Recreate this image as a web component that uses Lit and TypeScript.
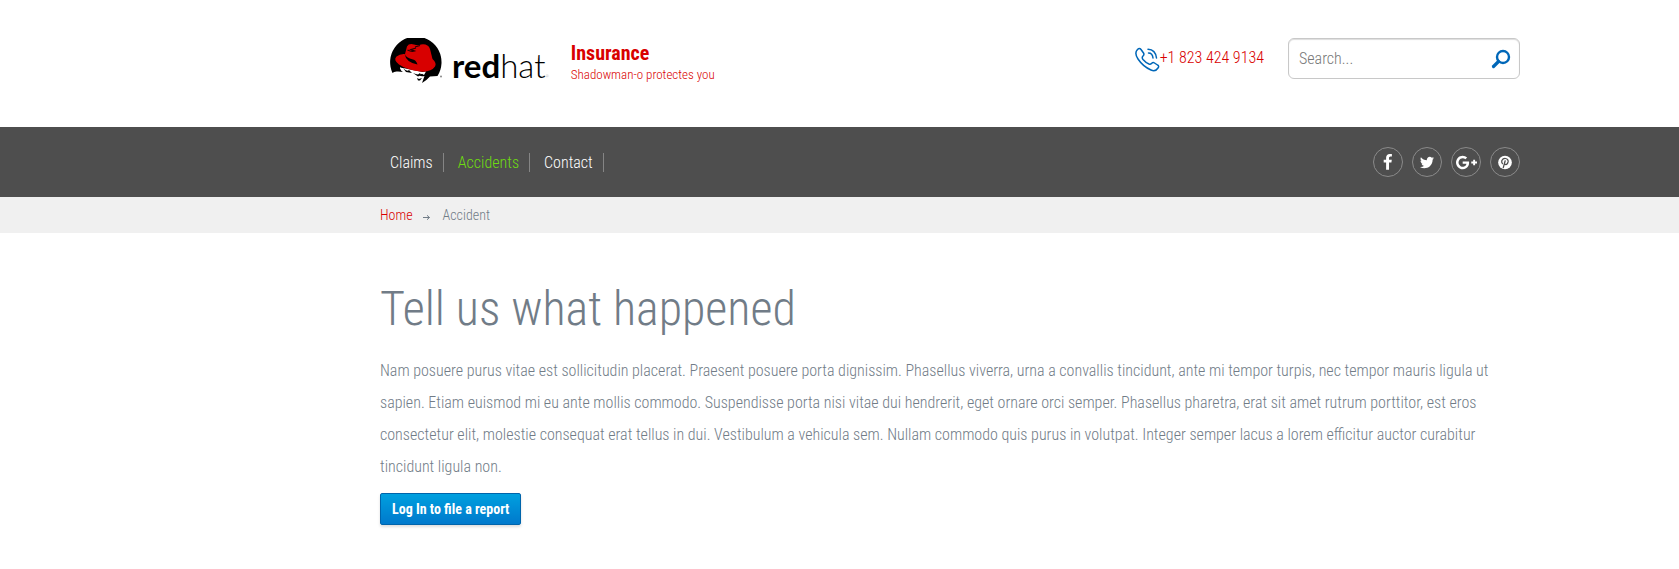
import { LitElement, html, css, svg } from "lit";
import { customElement } from "lit/decorators.js";

const facebook = svg`<path d="M1343 12v264h-157q-86 0-116 36t-30 108v189h293l-39 296h-254v759h-306v-759h-255v-296h255v-218q0-186 104-288.500t277-102.500q147 0 228 12z"/>`;
const twitter = svg`<path d="M1684 408q-67 98-162 167 1 14 1 42 0 130-38 259.500t-115.500 248.500-184.500 210.500-258 146-323 54.500q-271 0-496-145 35 4 78 4 225 0 401-138-105-2-188-64.500t-114-159.500q33 5 61 5 43 0 85-11-112-23-185.500-111.500t-73.500-205.500v-4q68 38 146 41-66-44-105-115t-39-154q0-88 44-163 121 149 294.500 238.500t371.500 99.500q-8-38-8-74 0-134 94.500-228.500t228.500-94.500q140 0 236 102 109-21 205-78-37 115-142 178 93-10 186-50z"/>`;
const google = svg`<path d="M1437 913q0 208-87 370.500t-248 254-369 91.500q-149 0-285-58t-234-156-156-234-58-285 58-285 156-234 234-156 285-58q286 0 491 192l-199 191q-117-113-292-113-123 0-227.500 62t-165.500 168.500-61 232.500 61 232.500 165.500 168.500 227.500 62q83 0 152.500-23t114.500-57.500 78.500-78.500 49-83 21.500-74h-416v-252h692q12 63 12 122zm867-122v210h-209v209h-210v-209h-209v-210h209v-209h210v209h209z"/>`;
const pinterest = svg`<g><circle cx="12" cy="12" r="12"/><path d="M7.500 14Q5.500 11.500 6.500 8.500Q8.500 4.500 13 5Q18 6 17.500 10.500Q16.500 15.500 13.500 15.700Q11.500 15.500 11 13.500M12.300 9L9 21" fill="none" stroke="#4e4e4e" stroke-width="2.200" stroke-linecap="round"/></g>`;

const networks = [
  { label: "Facebook", box: "90 0 1792 1792", width: 17, shape: facebook },
  { label: "Twitter", box: "0 0 1792 1792", width: 16, shape: twitter },
  { label: "Google Plus", box: "0 0 2304 1792", width: 21, shape: google },
  { label: "Pinterest", box: "-2 -2 28 28", width: 16, shape: pinterest },
];

const sections = [
  { label: "Claims", current: false },
  { label: "Accidents", current: true },
  { label: "Contact", current: false },
];

@customElement("app-root")
export class AppRoot extends LitElement {
  static styles = css`
    :host {
      display: block;
      background: #fff;
      color: #717c87;
      font: 300 16px/32px "Roboto Condensed", Roboto, sans-serif;
    }
    * { box-sizing: border-box; }
    a { color: #d90000; text-decoration: none; }
    svg { display: block; }
    .wrap { max-width: 1140px; margin: 0 24px 0 380px; }
    .top {
      display: flex;
      align-items: flex-start;
      padding: 38px 0 43px 9px;
    }
    .logo { display: flex; color: #000; }
    .mark { width: 54px; height: 46px; }
    .word {
      font: 300 33px/46px Lato, sans-serif;
      padding: 4px 0 0 9px;
      height: 46px;
    }
    .word b { font-weight: 700; }
    .reg { font-size: 4px; color: #777; }
    .brand { margin-left: 22px; color: #d90000; }
    .name { font-size: 20px; line-height: 30px; font-weight: 700; }
    .tag { font-size: 13px; line-height: 14px; }
    .contact { display: flex; align-items: flex-start; gap: 24px; margin-left: auto; }
    .phone { display: flex; align-items: center; line-height: 40px; }
    .phone-icon { margin-top: 4px; }
    .search { position: relative; width: 232px; }
    .field {
      display: block;
      width: 100%;
      height: 41px;
      padding: 0 48px 0 10px;
      border: 1px solid #c8c8c8;
      border-radius: 6px;
      box-shadow: inset 0 1px 1px #ddd;
      font: inherit;
      color: #555;
      background: #fff;
    }
    .field::placeholder { color: #777; opacity: 1; }
    .go {
      position: absolute;
      top: 11px;
      right: 9px;
      padding: 0;
      border: 0;
      background: none;
      cursor: pointer;
    }
    .bar { background: #4e4e4e; }
    .nav { display: flex; align-items: center; justify-content: space-between; height: 70px; }
    .menu { display: flex; margin: 0; padding: 0; list-style: none; }
    .menu li {
      padding: 0 10px 0 14px;
      border-right: 1px solid #858585;
      line-height: 19px;
    }
    .menu li:first-child { padding-left: 10px; }
    .menu a { color: #fff; }
    .menu .current { color: #6edd11; }
    .social { display: flex; gap: 9px; }
    .social a {
      display: grid;
      place-items: center;
      width: 30px;
      height: 30px;
      border: 1px solid #8a8a8a;
      border-radius: 50%;
      color: #fff;
    }
    .trail { background: #f0f0f0; }
    .crumbs {
      display: flex;
      align-items: center;
      height: 36px;
      font-size: 14px;
    }
    .crumbs svg { margin: 4px 13px 0 10px; }
    h1 {
      margin: 0;
      padding: 44px 0 14px;
      font-size: 48px;
      line-height: 64px;
      font-weight: 300;
    }
    p { margin: 0; font-size: 16px; line-height: 32px; }
    .login {
      display: block;
      height: 32px;
      margin: 10px 0 24px;
      padding: 0 11px;
      border: 1px solid #0064ab;
      border-radius: 2px;
      background: linear-gradient(#00a0df, #0079cc);
      box-shadow: 0 2px 3px #0002;
      font: 700 14px/30px "Roboto Condensed", Roboto, sans-serif;
      color: #fff;
      cursor: pointer;
    }
    @media (max-width: 1200px) {
      .wrap { margin-left: 24px; }
      .top { flex-wrap: wrap; gap: 16px 0; }
    }
  `;

  render() {
    return html`
      <header>
        <div class="wrap top">
          <a class="logo" href="#" aria-label="Red Hat">
            <svg class="mark" viewBox="0 0 54 46" aria-hidden="true">
              <path d="M3.500 35A25.700 25.700 0 1 1 48.500 38L41 38.500Q38 42 33 45L35.500 38Q32 39 30 37L36 34.500L14 30L11 30Q12 33 14 34L9 33.500Q5 33 3.500 35z" fill="#000"/>
              <path d="M11 29Q22 36 37 33.500L35 37Q30 33 28.500 37L24 36Q21 32 17 34L12 32z" fill="#fff"/>
              <path d="M24 35q3 1 5 1.500l2-1.500 1 2-3 1.500zM28 40l2 1 3-1-2 2.500h-2zM14 30q4 4 6 2l3 3-6-1z" fill="#000"/>
              <path d="M18 8.500Q20 5 25 6.500Q29 8 32 6.500Q39 5.500 41 11L43.500 21Q48 25 46 28.500Q42 34.500 31 33.500Q18 32 10 26.500Q4 22 7.500 18.500Q11 15.500 16 16z" fill="#d80000"/>
              <path d="M15.500 15.500Q17 20 24 21.500Q27 22 28.500 26.500Q17 24.500 15.500 15.500z" fill="#000"/>
              <path d="M18.500 12q4 2 7 1l-3.500-1.500 5-1.500M31 7.500l-5 1.500" fill="none" stroke="#200" stroke-width="1.300"/>
              <circle cx="52" cy="38.500" r="1" fill="#888"/>
            </svg>
            <span class="word"><b>red</b>hat<span class="reg">®</span></span>
          </a>
          <div class="brand">
            <div class="name">Insurance</div>
            <div class="tag">Shadowman-o protectes you</div>
          </div>
          <div class="contact">
            <a class="phone" href="tel:+18234249134">
              <svg class="phone-icon" width="25" height="26" viewBox="0 0 25 26" fill="none" stroke="#0067b8" stroke-width="1.500" stroke-linejoin="round" stroke-linecap="round" aria-hidden="true">
                <path d="M2.500 2.500Q4.500 .5 6 2.500L8.500 6Q9.500 7.500 8 9Q6.500 10.500 8 12.500Q10.500 15.500 14 17Q15.500 17.500 16.500 16.500Q18 15 19.500 16L22.500 18Q24.500 19 23 21Q20.500 25 16 23Q8 19.500 3 12Q-1 6 2.500 2.500z"/>
                <path d="M13 2.200Q20.500 2.500 21.500 11M13.500 6Q17.500 6 18 11"/>
              </svg>
              +1 823 424 9134
            </a>
            <form class="search" role="search" @submit=${(e: Event) => e.preventDefault()}>
              <input class="field" type="search" aria-label="Search" placeholder="Search..." />
              <button class="go" aria-label="Submit search">
                <svg width="20" height="20" viewBox="0 0 20 20" fill="none" stroke="#0067b8" stroke-linecap="round" aria-hidden="true">
                  <circle cx="12" cy="8" r="6" stroke-width="2.400"/>
                  <path d="M7.500 12.500L2.500 17.500" stroke-width="3.200"/>
                </svg>
              </button>
            </form>
          </div>
        </div>
      </header>
      <div class="bar">
        <nav class="wrap nav" aria-label="Main">
          <ul class="menu">
            ${sections.map(
              (s) => html`<li><a class=${s.current ? "current" : ""} href="#">${s.label}</a></li>`
            )}
          </ul>
          <div class="social">
            ${networks.map(
              (n) => html`<a href="#" aria-label=${n.label}>
                <svg width=${n.width} height="17" viewBox=${n.box} fill="currentColor" aria-hidden="true">${n.shape}</svg>
              </a>`
            )}
          </div>
        </nav>
      </div>
      <div class="trail">
        <nav class="wrap crumbs" aria-label="Breadcrumb">
          <a href="#">Home</a>
          <svg width="7" height="5" viewBox="0 0 7 5" fill="none" stroke="#717c87" aria-hidden="true">
            <path d="M0 2.500h6.500M4 .3l2.500 2.200L4 4.700"/>
          </svg>
          <span>Accident</span>
        </nav>
      </div>
      <main class="wrap">
        <h1>Tell us what happened</h1>
        <p>
          Nam posuere purus vitae est sollicitudin placerat. Praesent posuere porta dignissim. Phasellus viverra, urna a convallis tincidunt, ante mi tempor turpis, nec tempor mauris ligula ut sapien. Etiam euismod mi eu ante mollis commodo. Suspendisse porta nisi vitae dui hendrerit, eget ornare orci semper. Phasellus pharetra, erat sit amet rutrum porttitor, est eros consectetur elit, molestie consequat erat tellus in dui. Vestibulum a vehicula sem. Nullam commodo quis purus in volutpat. Integer semper lacus a lorem efficitur auctor curabitur tincidunt ligula non.
        </p>
        <button class="login">Log In to file a report</button>
      </main>
    `;
  }
}
